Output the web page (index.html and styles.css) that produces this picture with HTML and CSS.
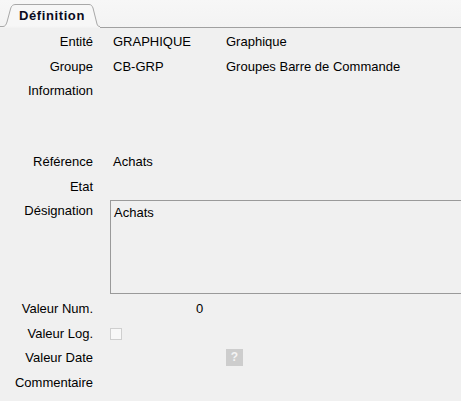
FILE: index.html
```html
<!DOCTYPE html>
<html lang="fr">
<head>
<meta charset="utf-8">
<link rel="stylesheet" href="styles.css">
</head>
<body>
<div class="panel">
  <div class="tabstrip">
    <div class="tab">
      <svg class="tab-shape" width="100" height="28" viewBox="0 0 100 28">
        <path d="M0 26.5 L3 26.5 C5 26.5 6 25 7 22 L10.5 9 C11.5 5.5 13 4.5 16 4.5 L89 4.5 C91 4.5 92 5.5 93 8 L97 24 C97.6 26 98.5 26.5 100 26.5" fill="#f7f7f7" stroke="#a8a8a8" stroke-width="1"/>
      </svg>
      <span class="tab-label">Définition</span>
    </div>
    <div class="strip-right"></div>
  </div>

  <div class="form">
    <div class="row">
      <div class="lbl">Entité</div>
      <div class="val code">GRAPHIQUE</div>
      <div class="val">Graphique</div>
    </div>
    <div class="row">
      <div class="lbl">Groupe</div>
      <div class="val code">CB-GRP</div>
      <div class="val">Groupes Barre de Commande</div>
    </div>
    <div class="row">
      <div class="lbl">Information</div>
    </div>
    <div class="spacer"></div>
    <div class="row">
      <div class="lbl">Référence</div>
      <div class="val">Achats</div>
    </div>
    <div class="row">
      <div class="lbl">Etat</div>
    </div>
    <div class="row row-area">
      <div class="lbl">Désignation</div>
      <div class="area">Achats</div>
    </div>
    <div class="row">
      <div class="lbl">Valeur Num.</div>
      <div class="num">0</div>
    </div>
    <div class="row">
      <div class="lbl">Valeur Log.</div>
      <div class="check"></div>
    </div>
    <div class="row">
      <div class="lbl">Valeur Date</div>
      <div class="datebtn">?</div>
    </div>
    <div class="row">
      <div class="lbl">Commentaire</div>
    </div>
  </div>
</div>
</body>
</html>
```

FILE: styles.css
```css
html, body {
  margin: 0;
  padding: 0;
  background: #f0f0f0;
  overflow: hidden;
}
body {
  width: 461px;
  height: 401px;
  font-family: "Liberation Sans", Arial, sans-serif;
  font-size: 13px;
  color: #000;
}
.panel {
  width: 461px;
  height: 401px;
}
.tabstrip {
  display: flex;
  height: 28px;
  background: linear-gradient(#f7f7f7, #f3f3f3);
}
.strip-right {
  flex: 1;
  height: 27px;
  border-bottom: 1px solid #a0a0a0;
}
.tab {
  position: relative;
  width: 100px;
  height: 28px;
  flex: none;
}
.tab-shape {
  position: absolute;
  left: 0;
  top: 0;
}
.tab-label {
  position: relative;
  display: block;
  padding-left: 19px;
  padding-top: 8px;
  font-weight: bold;
  letter-spacing: 0.6px;
  line-height: 15px;
  color: #0a0a20;
}
.form {
  padding-top: 2px;
}
.row {
  display: flex;
  height: 24.5px;
  line-height: 24px;
  white-space: nowrap;
}
.lbl {
  width: 93px;
  text-align: right;
  flex: none;
}
.val {
  margin-left: 20px;
}
.val.code {
  width: 113px;
  flex: none;
}
.val.code + .val {
  margin-left: 0;
}
.spacer {
  height: 46.5px;
}
.row-area {
  height: 98px;
}
.area {
  margin-left: 17px;
  margin-top: 1px;
  flex: 1;
  height: 94px;
  box-sizing: border-box;
  border: 1px solid #9a9a9a;
  border-right: none;
  padding-left: 3px;
  line-height: 18px;
  padding-top: 3px;
}
.num {
  margin-left: 103px;
}
.check {
  margin-left: 17px;
  margin-top: 6px;
  width: 12px;
  height: 12px;
  box-sizing: border-box;
  border: 1px solid #cfcfcf;
  background: #f8f8f8;
}
.datebtn {
  margin-left: 133px;
  margin-top: 3px;
  width: 17px;
  height: 17px;
  background: #cdcdcd;
  color: #f4f4f4;
  font-size: 12px;
  font-weight: bold;
  line-height: 17px;
  text-align: center;
}
```
